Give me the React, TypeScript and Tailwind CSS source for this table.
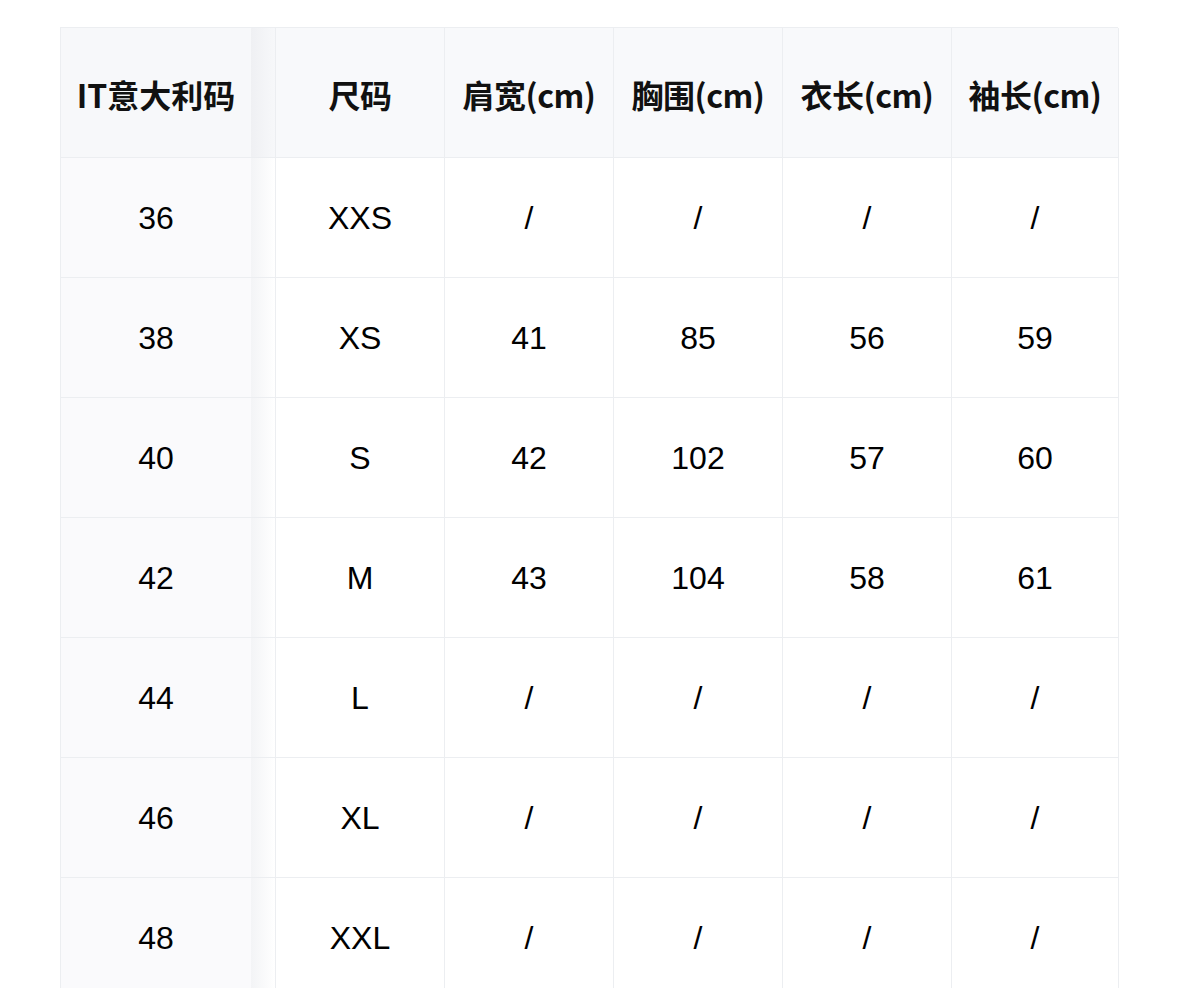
import React from "react";

const headers = ["尺码", "肩宽(cm)", "胸围(cm)", "衣长(cm)", "袖长(cm)"];
const rows: string[][] = [
  ["36", "XXS", "/", "/", "/", "/"],
  ["38", "XS", "41", "85", "56", "59"],
  ["40", "S", "42", "102", "57", "60"],
  ["42", "M", "43", "104", "58", "61"],
  ["44", "L", "/", "/", "/", "/"],
  ["46", "XL", "/", "/", "/", "/"],
  ["48", "XXL", "/", "/", "/", "/"],
];

const headFont = {
  fontFamily: '"Noto Sans CJK SC", "Noto Sans", sans-serif',
};
const bodyFont = {
  fontFamily: '"Liberation Sans", Arial, sans-serif',
};

export default function App() {
  return (
    <div className="w-[1179px] h-[988px] overflow-hidden bg-white pt-[27px] pl-[60px]">
      <div className="grid w-[1058px] grid-cols-[215px_169px_169px_169px_169px_167px] border-l border-t border-[#eceef1]">
        {/* header */}
        <div className="flex h-[130px] border-b border-r border-[#eceef1] bg-[#f7f8fa]">
          <div
            className="flex w-[190px] items-center justify-center pt-[2px] text-[32px] font-bold text-[#111]"
            style={headFont}
          >
            IT意大利码
          </div>
          <div className="w-[24px] bg-gradient-to-r from-[#eff0f3] to-[#f7f8fa]" />
        </div>
        {headers.map((h) => (
          <div
            key={h}
            className="flex h-[130px] items-center justify-center border-b border-r border-[#eceef1] bg-[#f8f9fb] pt-[2px] text-[32px] font-bold tracking-[-0.5px] text-[#111]"
            style={headFont}
          >
            {h}
          </div>
        ))}
        {rows.map((r, i) => (
          <React.Fragment key={i}>
            <div className="flex h-[120px] border-b border-r border-[#eceef1] bg-[#fafafc]">
              <div
                className="flex w-[190px] items-center justify-center pt-[1px] text-[32px] text-black"
                style={bodyFont}
              >
                {r[0]}
              </div>
              <div className="w-[24px] bg-gradient-to-r from-[#f3f4f6] to-white" />
            </div>
            {r.slice(1).map((c, j) => (
              <div
                key={j}
                className="flex h-[120px] items-center justify-center border-b border-r border-[#eceef1] bg-white pt-[1px] text-[32px] text-black"
                style={bodyFont}
              >
                {c}
              </div>
            ))}
          </React.Fragment>
        ))}
      </div>
    </div>
  );
}
